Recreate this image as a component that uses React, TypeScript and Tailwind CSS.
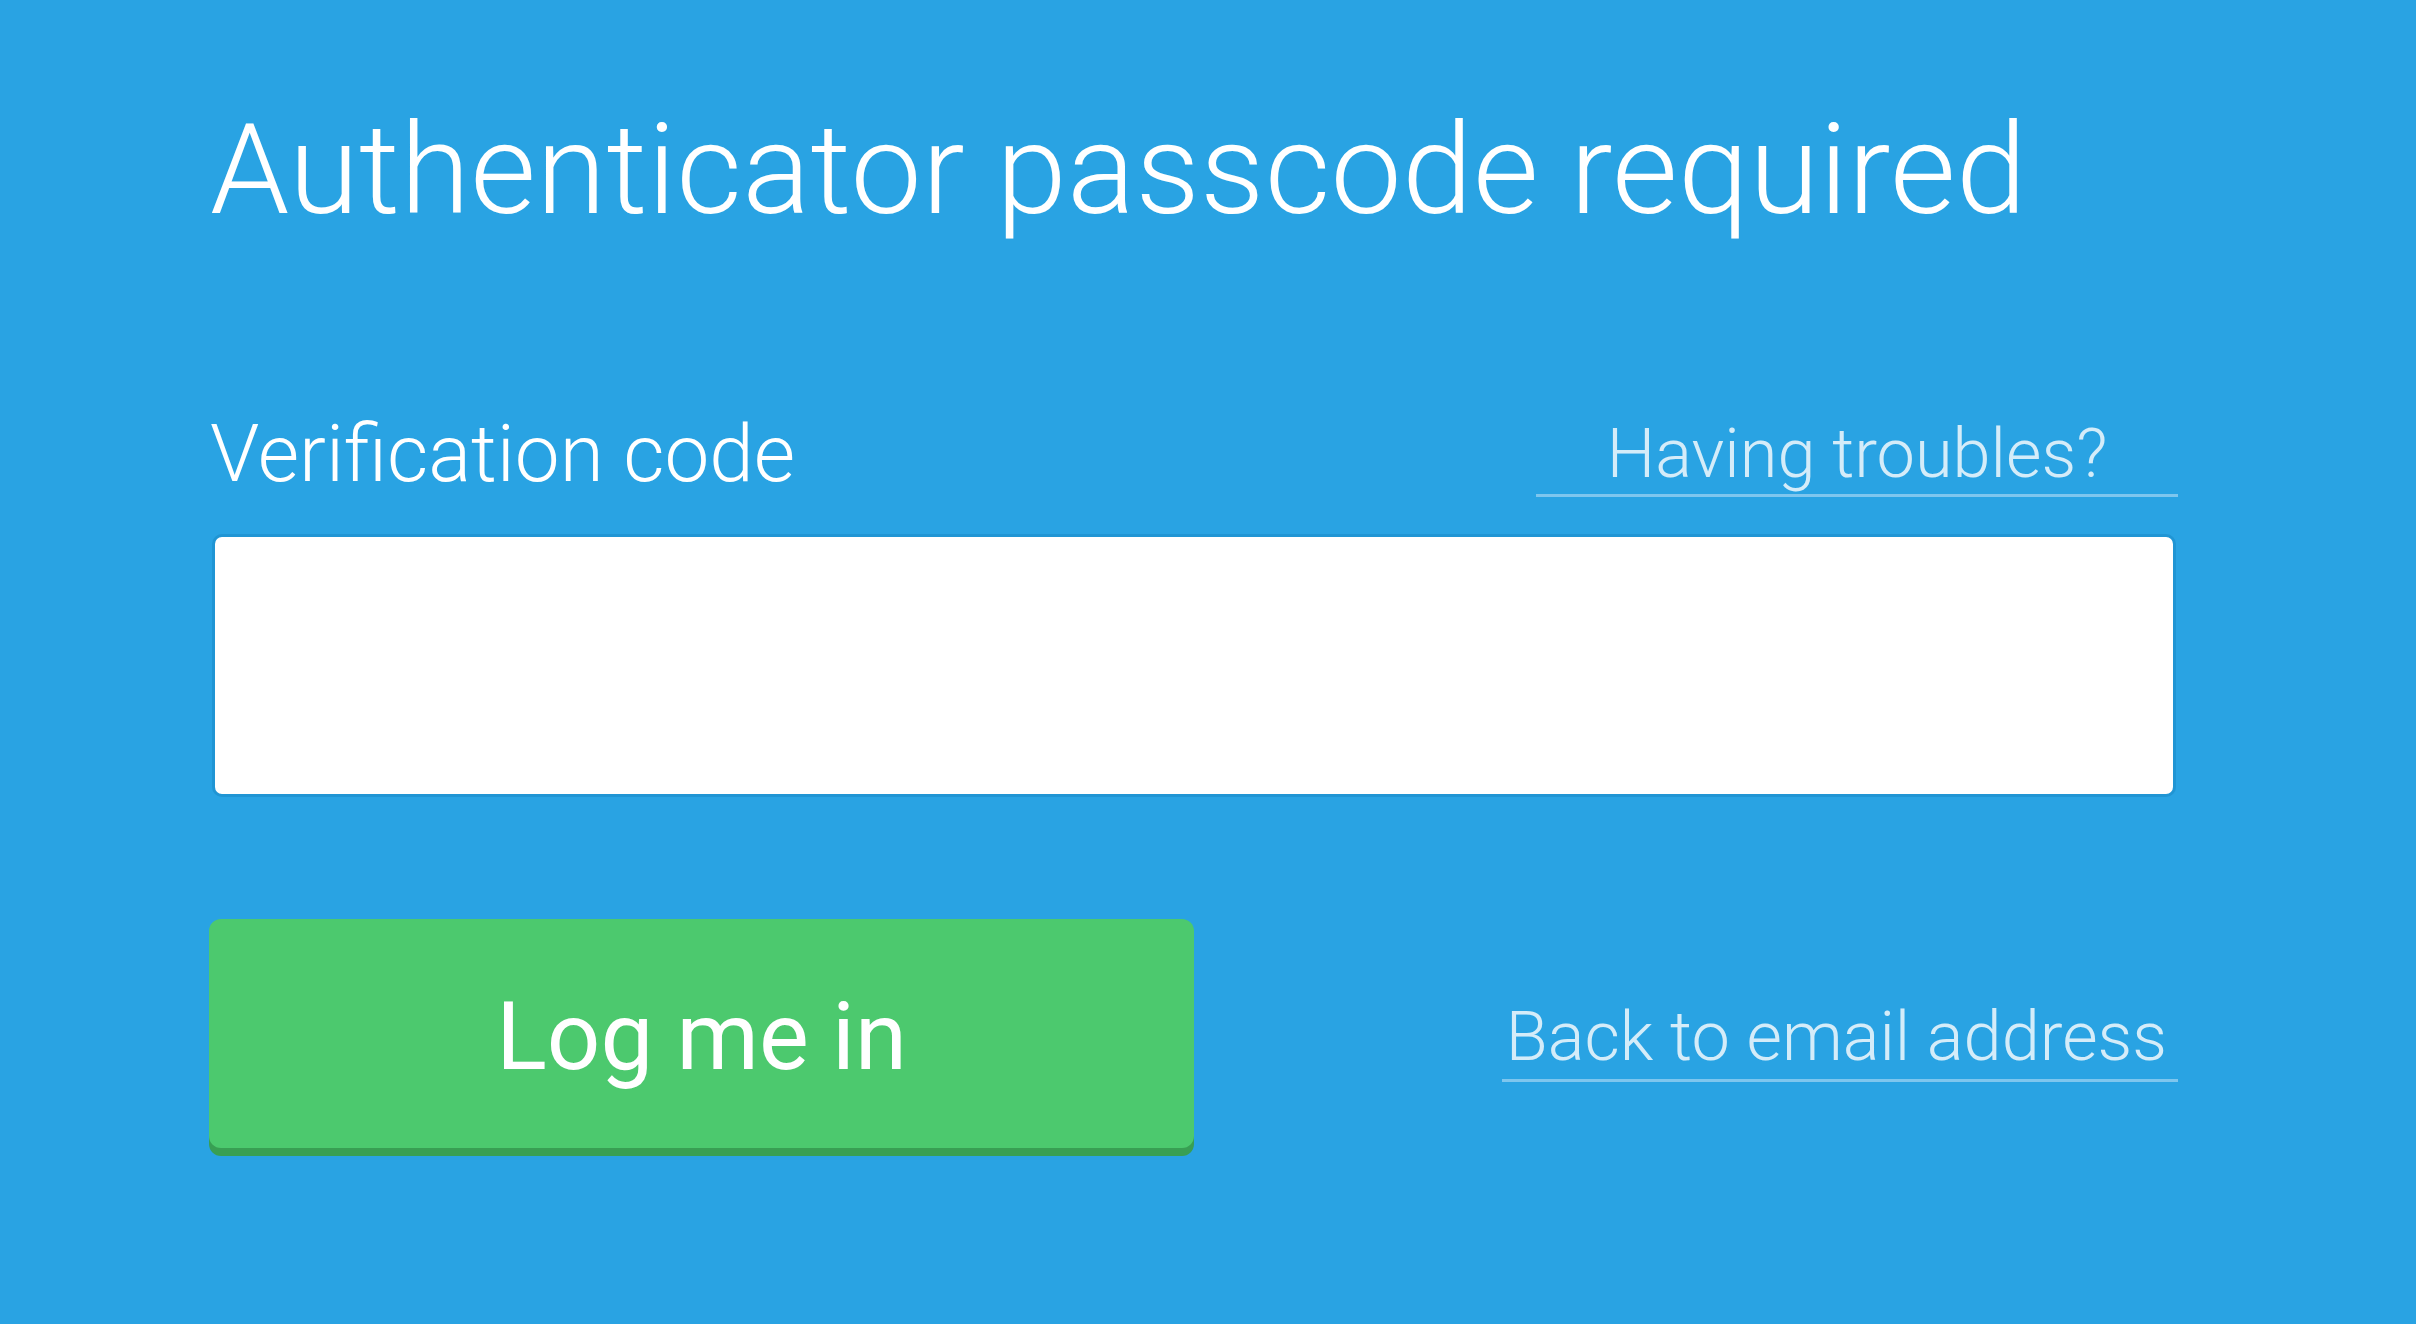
import { useState } from 'react';

export default function App() {
  const [code, setCode] = useState('');

  return (
    <div className="min-h-screen w-full bg-[#29a3e3] font-['Roboto','Liberation_Sans',sans-serif]">
      <div className="w-[1968px] pl-[210px] pt-[106px] box-content">
        <h1 className="text-[127px] leading-none font-light text-white tracking-[0.3px] whitespace-nowrap">
          Authenticator passcode required
        </h1>

        <div className="mt-[181px] flex items-end justify-between">
          <label htmlFor="code" className="text-[80px] leading-none font-light text-white pb-[3px]">
            Verification code
          </label>
          <a
            href="#"
            className="w-[642px] text-center text-[68.5px] leading-none font-light text-[#d4ecf9] border-b-[3px] border-[#7ec6ee] pb-[6px]"
          >
            Having troubles?
          </a>
        </div>

        <input
          id="code"
          type="text"
          value={code}
          onChange={(e) => setCode(e.target.value)}
          className="mt-[37px] ml-[2px] block w-[1964px] h-[263px] bg-white rounded-[10px] border-[3px] border-[#2095d4] px-8 text-[80px] text-gray-800 outline-none"
        />

        <div className="mt-[122px] flex items-center justify-between">
          <button
            type="button"
            className="w-[985px] h-[229px] -ml-[1px] rounded-[12px] bg-[#4cc96e] text-white text-[94px] leading-none font-normal pt-[6px] shadow-[0_8px_0_#389f53]"
          >
            Log me in
          </button>
          <a
            href="#"
            className="mt-[18px] pl-[4px] pr-[11px] text-[68.5px] leading-none font-light text-[#d4ecf9] border-b-[3px] border-[#7ec6ee] pb-[7px]"
          >
            Back to email address
          </a>
        </div>
      </div>
    </div>
  );
}
